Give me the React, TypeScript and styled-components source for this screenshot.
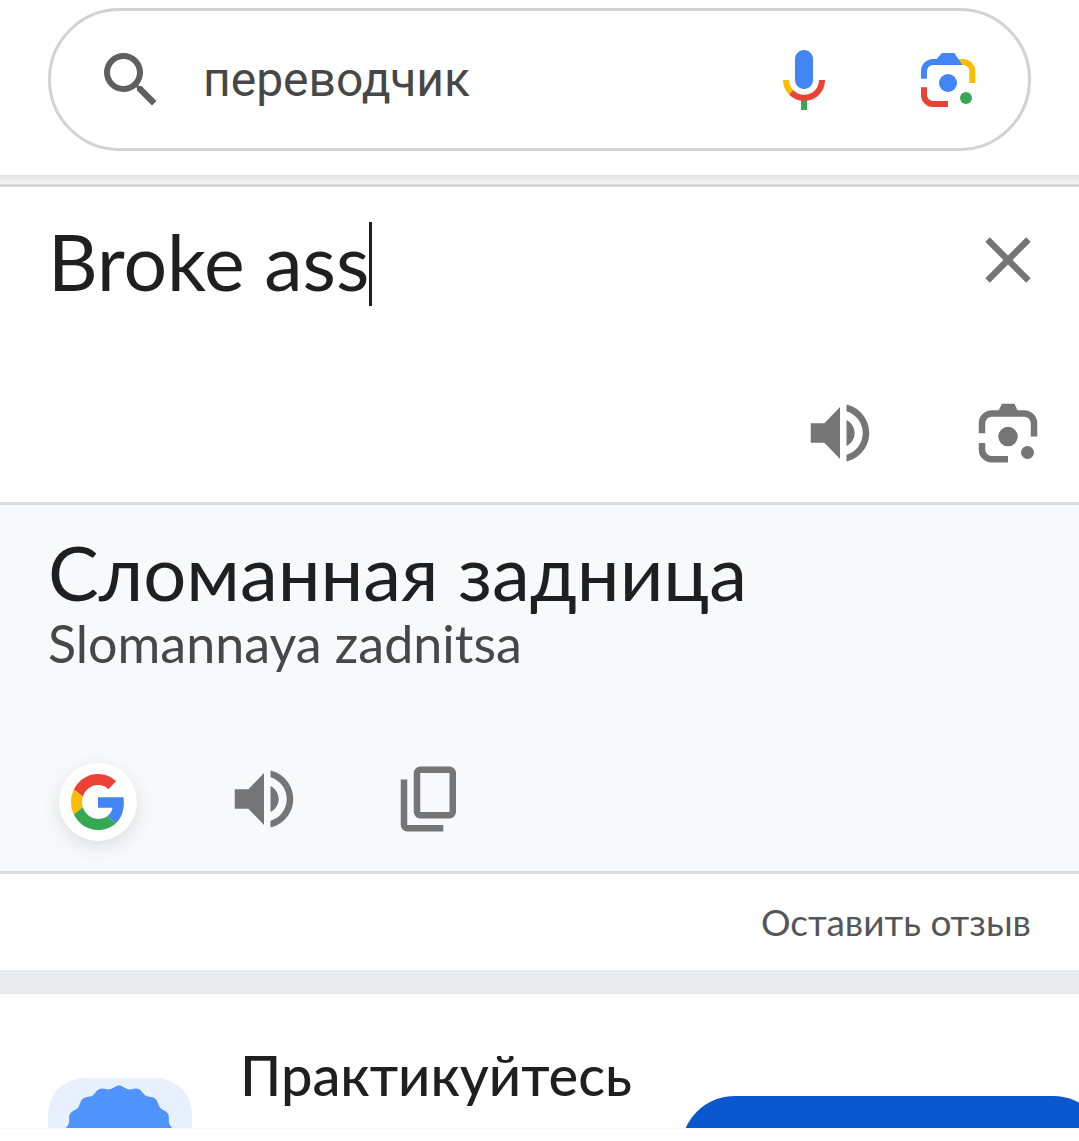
import React, { useState } from "react";
import styled, { createGlobalStyle } from "styled-components";

const GlobalStyle = createGlobalStyle`
  *, *::before, *::after { box-sizing: border-box; }
  body {
    margin: 0;
    background: #ffffff;
    color: #1f1f1f;
    font-family: Lato, "Open Sans", sans-serif;
    overflow-x: hidden;
  }
  button, input { font: inherit; color: inherit; border: 0; padding: 0; background: none; }
  button { cursor: pointer; }
  svg { display: block; }
`;

const Header = styled.header`
  padding: 8px 48px 24px;
`;

const SearchBox = styled.form`
  display: flex;
  align-items: center;
  height: 143px;
  padding: 0 44px;
  border: 3px solid #d2d2d2;
  border-radius: 72px;
`;

const SearchInput = styled.input`
  flex: 1;
  min-width: 0;
  margin: 0 36px;
  font-family: Roboto, sans-serif;
  font-size: 48px;
  line-height: 64px;
  color: #474747;
  outline: none;
`;

const SearchActions = styled.div`
  display: flex;
  gap: 72px;
`;

const IconButton = styled.button`
  display: flex;
  flex: none;
  color: #757575;
`;

const ShadowStrip = styled.div`
  height: 12px;
  border-bottom: 3px solid #d5d6d8;
  background: linear-gradient(#e4e4e4, #f4f4f4);
`;

const Source = styled.section`
  display: flex;
  flex-direction: column;
  justify-content: space-between;
  min-height: 318px;
  padding: 34px 32px 30px 48px;
  border-bottom: 3px solid #dadce0;
`;

const SourceRow = styled.div`
  display: flex;
  align-items: flex-start;
  justify-content: space-between;
`;

const Editor = styled.div`
  display: flex;
  align-items: flex-start;
  padding-top: 1px;
`;

const SourceInput = styled.input`
  field-sizing: content;
  font-size: 77px;
  line-height: 78px;
  outline: none;
  caret-color: transparent;
`;

const Caret = styled.span`
  width: 3px;
  height: 84px;
  background: #1f1f1f;
`;

const SourceActions = styled.div`
  display: flex;
  justify-content: flex-end;
  gap: 90px;
`;

const Target = styled.section`
  display: flex;
  flex-direction: column;
  justify-content: space-between;
  min-height: 369px;
  padding: 24px 48px 30px;
  background: #f8f9fb;
  border-bottom: 3px solid #dadce0;
`;

const Translation = styled.p`
  margin: 0;
  font-size: 76px;
  line-height: 86px;
`;

const Transliteration = styled.p`
  margin: 0;
  font-size: 52px;
  line-height: 56px;
  color: #474747;
`;

const TargetActions = styled.div`
  display: flex;
  align-items: flex-start;
  gap: 88px;
  height: 81px;
  padding-left: 11px;
`;

const GoogleButton = styled.button`
  display: flex;
  align-items: center;
  justify-content: center;
  align-self: flex-end;
  width: 78px;
  height: 78px;
  border-radius: 50%;
  background: #ffffff;
  box-shadow: 0 6px 18px rgba(60, 64, 67, 0.14);
`;

const Feedback = styled.div`
  display: flex;
  align-items: center;
  justify-content: flex-end;
  height: 96px;
  padding: 0 48px;
`;

const FeedbackLink = styled.a`
  font-size: 37px;
  line-height: 48px;
  color: #54565a;
  text-decoration: none;
`;

const Divider = styled.div`
  height: 24px;
  background: #e8eaed;
`;

const Practice = styled.section`
  display: flex;
  align-items: flex-start;
  height: 135px;
  padding: 48px 0 0 48px;
  border-bottom: 1px solid #f7f7f7;
  overflow: hidden;
`;

const Tile = styled.div`
  flex: none;
  width: 144px;
  height: 144px;
  margin-top: 36px;
  border-radius: 36px;
  background: #e8f0fe;
`;

const PracticeTitle = styled.h2`
  flex: 1 0 auto;
  margin: 0 48px;
  font-size: 56px;
  line-height: 66px;
  font-weight: 500;
`;

const PracticeButton = styled.button`
  flex: none;
  width: 426px;
  height: 108px;
  margin: 54px -28px 0 0;
  border-radius: 54px;
  background: #0b57d0;
`;

const SearchIcon = () => (
  <svg width="72" height="72" viewBox="0 0 24 24" fill="#5f5f5f" aria-hidden="true">
    <path d="M15.5 14h-.79l-.28-.27A6.47 6.47 0 0 0 16 9.5 6.5 6.5 0 1 0 9.5 16c1.61 0 3.09-.59 4.23-1.57l.27.28v.79l5 4.99L20.49 19l-4.99-5zm-6 0C7.01 14 5 11.99 5 9.5S7.01 5 9.5 5 14 7.01 14 9.5 11.99 14 9.5 14z" />
  </svg>
);

const MicIcon = () => (
  <svg width="72" height="72" viewBox="0 0 24 24" aria-hidden="true">
    <path fill="#4285f4" d="M12 15c1.66 0 3-1.31 3-2.97V5.01C15 3.35 13.66 2 12 2S9 3.34 9 5.01v7.02C9 13.69 10.34 15 12 15z" />
    <path fill="#34a853" d="M11 18.08h2V22h-2z" />
    <path fill="#fbbc04" d="M7.05 16.87C5.78 15.54 5 14.04 5 12h2c0 1.45.56 2.42 1.47 3.38v.32l-1.15 1.18z" />
    <path fill="#ea4335" d="M12 16.93a4.97 5.25 0 0 1-3.54-1.55l-1.41 1.49C8.31 18.21 10.07 19 12 19c3.87 0 6.99-2.92 6.99-7H17c0 2.92-2.24 4.93-5 4.93z" />
  </svg>
);

const ColorLensIcon = () => (
  <svg width="72" height="72" viewBox="0 0 24 24" fill="none" strokeWidth="2" aria-hidden="true">
    <path stroke="#fbbc04" d="M15.5 6H17a3.1 3.1 0 0 1 3.1 3.1V13" />
    <path stroke="#4285f4" d="M4 11.6V9a3 3 0 0 1 3-3h4" />
    <path fill="#4285f4" d="M8.2 5 10 3h4.1l2.7 4H8z" />
    <path stroke="#ea4335" d="M4 14.4V17a3 3 0 0 0 3 3h5" />
    <circle cx="12" cy="13" r="3" fill="#4285f4" />
    <circle cx="18" cy="18" r="2" fill="#34a853" />
  </svg>
);

const LensIcon = () => (
  <svg width="78" height="78" viewBox="0 0 24 24" fill="none" stroke="currentColor" strokeWidth="2" aria-hidden="true">
    <path d="M4 12.1V9a3 3 0 0 1 3-3h10a3 3 0 0 1 3 3v4.1M4 15.1V17a3 3 0 0 0 3 3.1h5" />
    <g fill="currentColor" stroke="none">
      <path d="M9 5.4 10.1 3H14l1.1 2.4z" />
      <circle cx="12" cy="13.1" r="3" />
      <circle cx="18" cy="18" r="2" />
    </g>
  </svg>
);

const CloseIcon = () => (
  <svg width="78" height="78" viewBox="0 0 24 24" fill="currentColor" aria-hidden="true">
    <path d="M19 6.41 17.59 5 12 10.59 6.41 5 5 6.41 10.59 12 5 17.59 6.41 19 12 13.41 17.59 19 19 17.59 13.41 12z" />
  </svg>
);

const SpeakerIcon = () => (
  <svg width="78" height="78" viewBox="0 0 24 24" fill="currentColor" aria-hidden="true">
    <path d="M3 9v6h4.2l4.8 5V4L7.2 9H3zm13.5 3c0-1.77-1.02-3.29-2.5-4.03v8.05c1.48-.73 2.5-2.25 2.5-4.02zM14 3.23v2.06c2.89.86 5 3.54 5 6.71s-2.11 5.85-5 6.71v2.06c4.01-.91 7-4.49 7-8.77s-2.99-7.86-7-8.77z" />
  </svg>
);

const CopyIcon = () => (
  <svg width="78" height="78" viewBox="0 0 24 24" fill="none" stroke="currentColor" strokeWidth="2" aria-hidden="true">
    <rect x="8" y="3" width="11" height="14" rx="1" />
    <path d="M4 6v14a1 1 0 0 0 1 1h11.1" />
  </svg>
);

const GoogleIcon = () => (
  <svg width="54" height="56" viewBox="0 0 48 48" preserveAspectRatio="none" aria-hidden="true">
    <path fill="#ea4335" d="M24 9.5c3.54 0 6.71 1.22 9.21 3.6l6.85-6.85C35.9 2.38 30.47 0 24 0 14.62 0 6.51 5.38 2.56 13.22l7.98 6.19C12.43 13.72 17.74 9.5 24 9.5z" />
    <path fill="#4285f4" d="M46.98 24.55c0-1.57-.15-3.09-.38-4.55H24v9.02h12.94c-.58 2.96-2.26 5.48-4.78 7.18l7.73 6c4.51-4.18 7.09-10.36 7.09-17.65z" />
    <path fill="#fbbc05" d="M10.53 28.59c-.48-1.45-.76-2.99-.76-4.59s.27-3.14.76-4.59l-7.98-6.19C.92 16.46 0 20.12 0 24c0 3.88.92 7.54 2.56 10.78l7.97-6.19z" />
    <path fill="#34a853" d="M24 48c6.48 0 11.93-2.13 15.89-5.81l-7.73-6c-2.15 1.45-4.92 2.3-8.16 2.3-6.26 0-11.57-4.22-13.47-9.91l-7.98 6.19C6.51 42.62 14.62 48 24 48z" />
  </svg>
);

const SCALLOPS = 18;
const sealPoints = Array.from({ length: 360 }, (_, i) => {
  const angle = (i / 360) * Math.PI * 2;
  const radius = 55 + 1.5 * Math.cos(SCALLOPS * angle);
  return `${(71 + radius * Math.sin(angle)).toFixed(2)},${(64 - radius * Math.cos(angle)).toFixed(2)}`;
}).join(" ");

const SealIcon = () => (
  <svg width="144" height="144" viewBox="0 0 144 144" aria-hidden="true">
    <polygon fill="#4f94fb" points={sealPoints} />
  </svg>
);

export default function App() {
  const [query, setQuery] = useState("переводчик");
  const [source, setSource] = useState("Broke ass");

  return (
    <>
      <GlobalStyle />
      <Header>
        <SearchBox role="search" onSubmit={(e) => e.preventDefault()}>
          <SearchIcon />
          <SearchInput aria-label="Поиск" value={query} onChange={(e) => setQuery(e.target.value)} />
          <SearchActions>
            <IconButton type="button" aria-label="Голосовой поиск"><MicIcon /></IconButton>
            <IconButton type="button" aria-label="Поиск по картинке"><ColorLensIcon /></IconButton>
          </SearchActions>
        </SearchBox>
      </Header>
      <ShadowStrip />
      <main>
        <Source>
          <SourceRow>
            <Editor>
              <SourceInput aria-label="Исходный текст" value={source} onChange={(e) => setSource(e.target.value)} />
              <Caret />
            </Editor>
            <IconButton type="button" aria-label="Очистить" onClick={() => setSource("")}><CloseIcon /></IconButton>
          </SourceRow>
          <SourceActions>
            <IconButton type="button" aria-label="Прослушать"><SpeakerIcon /></IconButton>
            <IconButton type="button" aria-label="Перевести с камеры"><LensIcon /></IconButton>
          </SourceActions>
        </Source>
        <Target>
          <div>
            <Translation>Сломанная задница</Translation>
            <Transliteration>Slomannaya zadnitsa</Transliteration>
          </div>
          <TargetActions>
            <GoogleButton type="button" aria-label="Google"><GoogleIcon /></GoogleButton>
            <IconButton type="button" aria-label="Прослушать перевод"><SpeakerIcon /></IconButton>
            <IconButton type="button" aria-label="Копировать"><CopyIcon /></IconButton>
          </TargetActions>
        </Target>
        <Feedback>
          <FeedbackLink href="#feedback">Оставить отзыв</FeedbackLink>
        </Feedback>
        <Divider />
        <Practice>
          <Tile><SealIcon /></Tile>
          <PracticeTitle>Практикуйтесь</PracticeTitle>
          <PracticeButton type="button" aria-label="Начать практику" />
        </Practice>
      </main>
    </>
  );
}
